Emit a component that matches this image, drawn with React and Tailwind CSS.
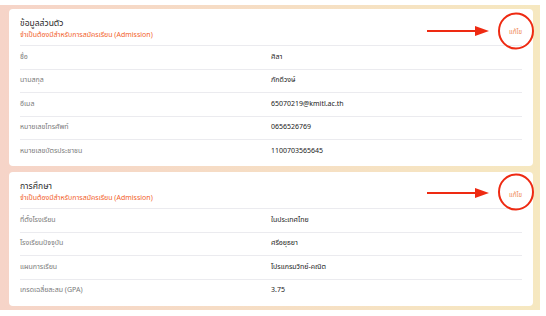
import React from "react";

const font = { fontFamily: '"Noto Sans Thai", "Noto Sans", "Liberation Sans", sans-serif' };

function Row({ label, value }) {
  return (
    <div className="grid grid-cols-2 h-[23.5px] items-center border-t border-[#ebebef]">
      <div className="text-[7px] text-[#7a7a7a] leading-none">{label}</div>
      <div className="text-[7px] text-[#1a1a1a] leading-none">{value}</div>
    </div>
  );
}

function Card({ title, rows, className }) {
  return (
    <div className={"bg-white rounded-[4px] px-[11px] " + className}>
      <div className="h-[36px] flex justify-between items-start pt-[9px]">
        <div className="flex flex-col">
          <div className="text-[8.5px] leading-[12px] text-[#2a2a2a]">{title}</div>
          <div className="text-[7px] leading-[10px] text-[#f2622a]">จำเป็นต้องมีสำหรับการสมัครเรียน (Admission)</div>
        </div>
        <div className="text-[6.5px] leading-[10px] text-[#f08a55] mt-[9px]">แก้ไข</div>
      </div>
      {rows.map((r) => (
        <Row key={r[0]} label={r[0]} value={r[1]} />
      ))}
    </div>
  );
}

export default function App() {
  return (
    <div className="relative w-[546px] h-[316px] bg-white pt-[5px]" style={font}>
      <div className="w-[540px] h-[305px] bg-gradient-to-r from-[#f6d4c8] to-[#f6e8c0] pl-[9px] pr-[7px] pt-[4px] flex flex-col gap-[6px]">
        <Card
          className="h-[157px]"
          title="ข้อมูลส่วนตัว"
          rows={[
            ["ชื่อ", "ศิลา"],
            ["นามสกุล", "ภักดีวงษ์"],
            ["อีเมล", "65070219@kmitl.ac.th"],
            ["หมายเลขโทรศัพท์", "0656526769"],
            ["หมายเลขบัตรประชาชน", "1100703565645"],
          ]}
        />
        <Card
          className="h-[134px]"
          title="การศึกษา"
          rows={[
            ["ที่ตั้งโรงเรียน", "ในประเทศไทย"],
            ["โรงเรียนปัจจุบัน", "ศรีอยุธยา"],
            ["แผนการเรียน", "โปรแกรมวิทย์-คณิต"],
            ["เกรดเฉลี่ยสะสม (GPA)", "3.75"],
          ]}
        />
      </div>
      <svg className="absolute left-0 top-0 pointer-events-none" width="546" height="316" viewBox="0 0 546 316">
        <g fill="none" stroke="#ee2a12" strokeWidth="2">
          <ellipse cx="516" cy="31" rx="17" ry="17.5" />
          <ellipse cx="516" cy="192" rx="17" ry="17.5" />
          <line x1="427" y1="31" x2="477" y2="31" />
          <line x1="427" y1="193" x2="477" y2="193" />
        </g>
        <g fill="#ee2a12">
          <polygon points="475,26 489,31 475,36" />
          <polygon points="475,188 489,193 475,198" />
        </g>
      </svg>
    </div>
  );
}
